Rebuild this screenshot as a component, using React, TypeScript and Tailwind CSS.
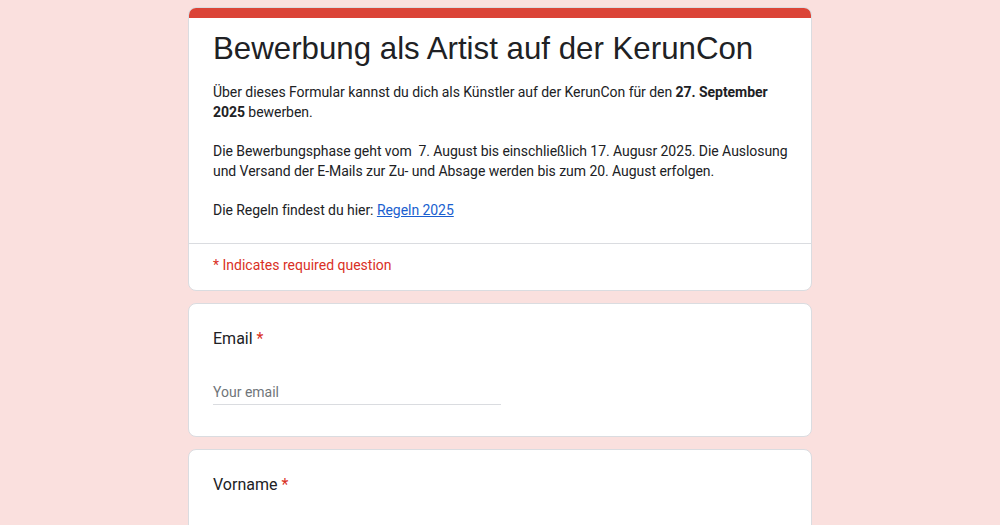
import React from "react";

export default function App() {
  const body = { fontFamily: "Roboto, 'Liberation Sans', Arial, sans-serif" };
  return (
    <div className="min-h-[525px] w-full bg-[#fae0de] pt-[7px] pb-10" style={body}>
      <div className="mx-auto w-[624px] flex flex-col gap-3">
        <div className="rounded-lg bg-white border border-[#dadce0] overflow-hidden">
          <div className="h-[10px] bg-[#db4437]" />
          <div className="pl-6 pr-[18px] pt-[11px] pb-[23px]">
            <h1
              className="text-[31.25px] leading-[40px] text-[#202124]"
              style={{ fontFamily: "'Liberation Sans', Arial, sans-serif" }}
            >
              Bewerbung als Artist auf der KerunCon
            </h1>
            <div className="mt-[13px] flex flex-col gap-[19px] text-[14px] leading-5 tracking-[-0.05px] text-[#202124]">
              <p>
                Über dieses Formular kannst du dich als Künstler auf der KerunCon für den{" "}
                <b className="font-bold">27. September 2025</b> bewerben.
              </p>
              <p>
                Die Bewerbungsphase geht vom&nbsp; 7. August bis einschließlich 17. Augusr 2025. Die Auslosung und
                Versand der E-Mails zur Zu- und Absage werden bis zum 20. August erfolgen.
              </p>
              <p>
                Die Regeln findest du hier:{" "}
                <a className="text-[#1a5fd0] underline" href="#">
                  Regeln 2025
                </a>
              </p>
            </div>
          </div>
          <div className="border-t border-[#dadce0] px-6 pt-[11px] pb-[15px] text-[14px] leading-5 text-[#d93025]">
            * Indicates required question
          </div>
        </div>

        <div className="rounded-lg bg-white border border-[#dadce0] px-6 pt-[23px] pb-6">
          <div className="text-[16px] leading-6 text-[#202124]">
            Email <span className="text-[#d93025]">*</span>
          </div>
          <div className="mt-[31px] w-[288px] border-b border-[#dadce0] pb-[2px] text-[14px] leading-5 text-[#70757a]">
            Your email
          </div>
          <div className="h-[7px]" />
        </div>

        <div className="rounded-lg bg-white border border-[#dadce0] px-6 pt-[23px] pb-6 h-[120px]">
          <div className="text-[16px] leading-6 text-[#202124]">
            Vorname <span className="text-[#d93025]">*</span>
          </div>
        </div>
      </div>
    </div>
  );
}
